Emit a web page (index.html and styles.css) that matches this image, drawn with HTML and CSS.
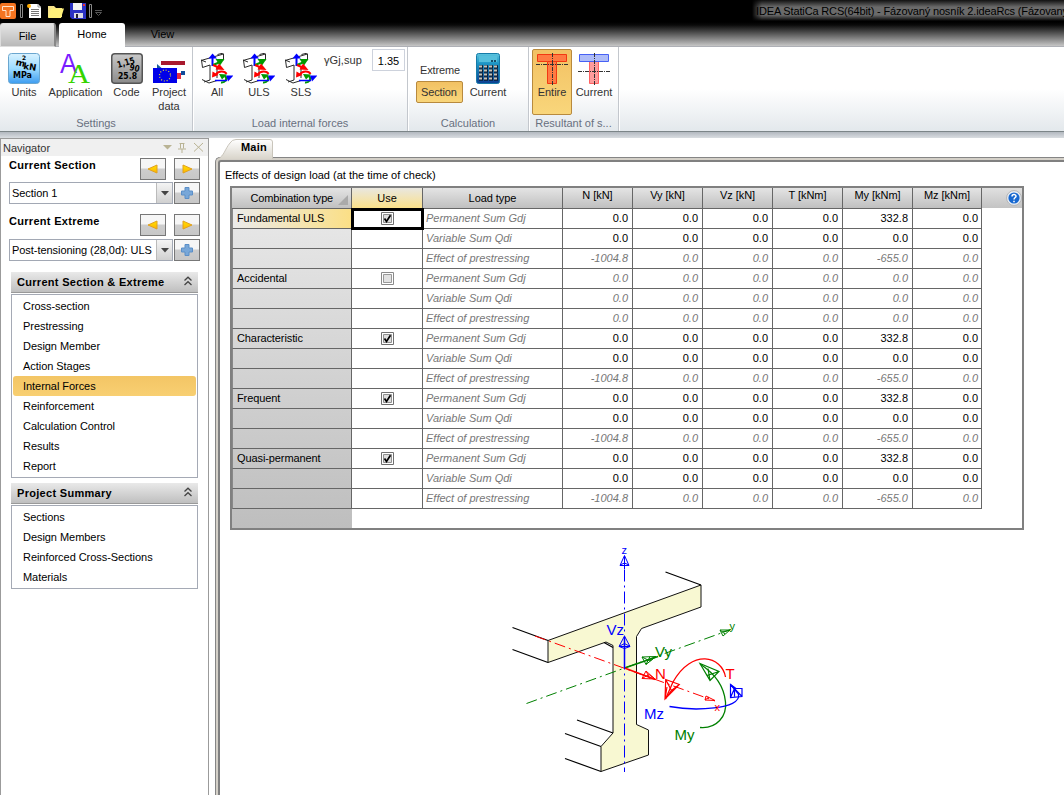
FILE: index.html
```html
<!DOCTYPE html>
<html lang="en">
<head>
<meta charset="utf-8">
<title>IDEA StatiCa RCS</title>
<link rel="stylesheet" href="styles.css">
</head>
<body>
<svg class="defs" width="0" height="0">
  <defs>
    <linearGradient id="blueBox" x1="0" y1="0" x2="0" y2="1"><stop offset="0" stop-color="#d9f2ff"/><stop offset=".5" stop-color="#9ddcff"/><stop offset="1" stop-color="#3d9cf0"/></linearGradient>
    <linearGradient id="grayBox" x1="0" y1="0" x2="0" y2="1"><stop offset="0" stop-color="#c9c9c9"/><stop offset="1" stop-color="#8b8b8b"/></linearGradient>
    <linearGradient id="calcBox" x1="0" y1="0" x2="0" y2="1"><stop offset="0" stop-color="#5cc4de"/><stop offset=".35" stop-color="#1b93c4"/><stop offset="1" stop-color="#0c3f92"/></linearGradient>
    <linearGradient id="goldArrow" x1="0" y1="0" x2="0" y2="1"><stop offset="0" stop-color="#ffe100"/><stop offset="1" stop-color="#ffb400"/></linearGradient>
  </defs>
  <symbol id="forces" viewBox="0 0 32 32">
    <path d="M0 7.500 22.500 1V7L16 9.500M.5 7l1 7.500L9 12v15M16 13v12M16.500 1.500l6-1.500M0 7l5 2M1 26.500l7 3.500 8-2.500M9 27l-6 2" fill="none" stroke="#2a2a2a"/>
    <path d="M11.500 13V4" stroke="#00f" stroke-width="2"/><path d="M7.500 5.500 11.500 .5l4.500 5z" fill="#00f"/>
    <path d="M12 12 18 9.500" stroke="#009a00" stroke-width="2"/><path d="M14.500 6h9l-4.500 6.500z" fill="#009a00"/>
    <path d="M12 12l7 3" stroke="red" stroke-width="2"/><path d="M18 10.500l5.500 6.500-9-.5z" fill="red"/>
    <path d="M15 21.500c2-4 9-4 10.500-.5" fill="none" stroke="red" stroke-width="2"/><path d="M11.500 18.500l6 3.500-6.500 2.500z" fill="red"/>
    <path d="M24 23c3 3 0 7-4 6.500" fill="none" stroke="#009a00" stroke-width="2"/><path d="M18 21l8 .5-5 5z" fill="#009a00"/>
    <path d="M14 27.500h12" stroke="#00f" stroke-width="1.500"/><path d="M25 22.500h7.500l-5.500 6z" fill="#00f"/>
  </symbol>
  <symbol id="check" viewBox="0 0 13 13">
    <path d="M.5.500h12v12H.500z" fill="#fff" stroke="#707070"/><path d="M2.500 2.500h8v8h-8z" fill="#ddd" stroke="#909090"/>
    <path d="M3.500 6.500 5.500 9.500 9.500 3.200" fill="none" stroke="#000" stroke-width="1.700"/>
  </symbol>
  <symbol id="uncheck" viewBox="0 0 13 13">
    <path d="M.5.500h12v12H.500z" fill="#fff" stroke="#8a8a8a"/><path d="M2.500 2.500h8v8h-8z" fill="#e2e2e2" stroke="#999"/>
  </symbol>
  <symbol id="left" viewBox="0 0 12 10"><path d="M10 1v8L1 5z" fill="url(#goldArrow)" stroke="#e0a020"/></symbol>
  <symbol id="right" viewBox="0 0 12 10"><path d="M2 1v8l9-4z" fill="url(#goldArrow)" stroke="#e0a020"/></symbol>
  <symbol id="plus" viewBox="0 0 12 12"><path d="M4 .5h4v3.500h3.500v4H8v3.500H4V8H.5V4H4z" fill="#78a7d8" stroke="#5b8fc8"/></symbol>
  <symbol id="collapse" viewBox="0 0 10 10"><path d="M1.500 4.500 5 1.200 8.500 4.500M1.500 9 5 5.700 8.500 9" fill="none" stroke="#444" stroke-width="1.300"/></symbol>
</svg>

<div class="top">
  <div class="titlebar">
    <svg class="quick" width="110" height="22" viewBox="0 0 110 22">
      <rect y="3" width="16" height="16" rx="2" fill="#f47421"/><path d="M2.500 6.500h11v4h-3.500v6H6v-6H2.500z" fill="none" stroke="#ffe3cc"/>
      <path d="M20.500 4.500h2v13h-2zM89.500 4.500h2v13h-2z" fill="#000" stroke="#8a8a8a"/>
      <path d="M29 4h9l3 3v11H29z" fill="#fff"/><path d="M31 9h8M31 11h8M31 13h8M31 15h8" stroke="#777" transform="translate(0 .5)"/><path d="M38 4v3h3" fill="none" stroke="#999"/><circle cx="29" cy="6" r="2" fill="#fa0"/>
      <path d="M48 6h6l2 2h6v9H48z" fill="#f7e38a"/><path d="M51 8.500h13l-3 9.500H48z" fill="#fff17a"/>
      <path d="M70 3h16v16H72l-2-2z" fill="#2b33c4"/><path d="M73 3h9v7h-9z" fill="#f3f3f3"/><path d="M83 4h2v2h-2z" fill="#e33"/><path d="M74 13h9v5h-9z" fill="#dcdce8"/><path d="M76 14h2v4h-2z" fill="#223"/>
      <path d="M95 10.500h7M95.500 12.500h6l-3 3z" fill="none" stroke="#555"/>
    </svg>
    <div class="title">IDEA StatiCa RCS(64bit) - Fázovaný nosník 2.ideaRcs (Fázovaný</div>
  </div>
  <div class="tabs"><div class="tab file">File</div><div class="tab home">Home</div><div class="tab view">View</div></div>
</div>

<div class="ribbon">
  <section class="group settings">
    <div class="tools">
      <div class="tool w48"><svg width="32" height="32" viewBox="0 0 32 32"><rect x=".5" y=".5" width="31" height="30" rx="3" fill="url(#blueBox)" stroke="#6aa6cf"/><text x="7" y="12" class="ic" transform="rotate(12 7 13)">m</text><text x="14" y="7" class="ic tiny">2</text><text x="15" y="16" class="ic" transform="rotate(8 15 16)" textLength="13" lengthAdjust="spacingAndGlyphs">kN</text><text x="5" y="25" class="ic" textLength="19" lengthAdjust="spacingAndGlyphs">MPa</text></svg><span>Units</span></div>
      <div class="tool w55"><svg width="32" height="32" viewBox="0 0 32 32"><text x="0" y="20" class="bigA" fill="#7a1cff" textLength="17" lengthAdjust="spacingAndGlyphs">A</text><text x="8" y="30" class="bigA serif" fill="#35d400" textLength="22" lengthAdjust="spacingAndGlyphs">A</text></svg><span>Application</span></div>
      <div class="tool w47"><svg width="32" height="32" viewBox="0 0 32 32"><rect x=".75" y=".75" width="30.500" height="29.500" rx="3" fill="url(#grayBox)" stroke="#555" stroke-width="1.500"/><text x="7" y="15" class="ic" transform="rotate(-16 7 15)" textLength="18" lengthAdjust="spacingAndGlyphs">1,15</text><text x="18" y="17" class="ic" transform="rotate(12 18 17)" textLength="10" lengthAdjust="spacingAndGlyphs">90</text><text x="7" y="26" class="ic" textLength="19" lengthAdjust="spacingAndGlyphs">25.8</text></svg><span>Code</span></div>
      <div class="tool w38"><svg width="32" height="32" viewBox="0 0 32 32"><path d="M8 8h24v4H8z" fill="#a8192e"/><path d="M4 11l8 7H4z" fill="#185a9c"/><path d="M28 18h4v4h-4z" fill="#114c9b"/><path d="M24 20h4v6h-4z" fill="#e22b3e"/><path d="M0 15h24v15H0z" fill="#0000e8"/><circle cx="12" cy="22.500" r="5.500" fill="none" stroke="#e6dc2e" stroke-width="1.200" stroke-dasharray="1 1.880"/></svg><span>Project<br>data</span></div>
    </div><h2>Settings</h2>
  </section>
  <section class="group load">
    <div class="tools">
      <div class="tool w42"><svg width="32" height="32"><use href="#forces"/></svg><span>All</span></div>
      <div class="tool w42"><svg width="32" height="32"><use href="#forces"/></svg><span>ULS</span></div>
      <div class="tool w42"><svg width="32" height="32"><use href="#forces"/></svg><span>SLS</span></div>
      <label class="gamma">γGj,sup</label><div class="number">1.35</div>
    </div><h2>Load internal forces</h2>
  </section>
  <section class="group calc">
    <div class="tools">
      <div class="stack"><span class="small">Extreme</span><span class="small on">Section</span></div>
      <div class="tool w50"><svg width="32" height="32" viewBox="0 0 32 32"><rect x="4.500" y=".5" width="23" height="30" rx="2" fill="url(#calcBox)" stroke="#167ba8"/><path d="M7 3h18v6H7z" fill="#55bfdc"/><path d="M19 8h5" stroke="#164d68" stroke-width="2" stroke-dasharray="2 1"/><path d="M7 14h19M7 18h19M7 22h19M7 26h19" stroke="#0b1d35" stroke-width="3.400" stroke-dasharray="4 1"/><path d="M7 13.500h19M7 17.500h19M7 21.500h19M7 25.500h19" stroke="#c9c3b7" stroke-width="2" stroke-dasharray="3 2"/></svg><span>Current</span></div>
    </div><h2>Calculation</h2>
  </section>
  <section class="group result">
    <div class="tools">
      <div class="tool w40 selected"><svg width="32" height="32" viewBox="0 0 32 32"><path d="M1.500 1.500h29v7h-10v22h-9v-22h-10z" fill="#ff7b42" stroke="#f23912"/><path d="M12 8.500h9" stroke="#f23912"/><path d="M16.500 0v32M0 11.500h32" stroke="#333" stroke-dasharray="4 1 1 1"/></svg><span>Entire</span></div>
      <div class="tool w44"><svg width="32" height="32" viewBox="0 0 32 32"><path d="M11.500 8.500h9v22h-9z" fill="#ff9c9c" stroke="#ff6262"/><path d="M1.500 1.500h29v7h-29z" fill="#aebcf8" stroke="#4761f5"/><path d="M16.500 0v32M0 18.500h32" stroke="#333" stroke-dasharray="4 1 1 1"/></svg><span>Current</span></div>
    </div><h2>Resultant of s...</h2>
  </section>
</div>
<div class="strip"></div>

<div class="work">
  <aside class="nav">
    <header class="navhead"><span>Navigator</span><svg width="46" height="12" viewBox="0 0 46 12"><path d="M2 3h9l-4.500 4.500z" fill="#b9b394"/><path d="M18.500 1.500h5M19.500 1.500v5M22.500 1.500v5M17 7h8M21 7v4" stroke="#b9b394" fill="none"/><path d="M33 1l9 8.500M42 1l-9 8.500" stroke="#b9b394"/></svg></header>
    <div class="pick">
      <div class="prow"><b>Current Section</b><i class="btn"><svg width="12" height="10"><use href="#left"/></svg></i><i class="btn"><svg width="12" height="10"><use href="#right"/></svg></i></div>
      <div class="crow"><div class="combo"><span>Section 1</span><i><svg width="8" height="5"><path d="M0 0h8L4 4.500z" fill="#444"/></svg></i></div><i class="btn"><svg width="12" height="12"><use href="#plus"/></svg></i></div>
    </div>
    <div class="pick second">
      <div class="prow"><b>Current Extreme</b><i class="btn"><svg width="12" height="10"><use href="#left"/></svg></i><i class="btn"><svg width="12" height="10"><use href="#right"/></svg></i></div>
      <div class="crow"><div class="combo"><span>Post-tensioning (28,0d): ULS</span><i><svg width="8" height="5"><path d="M0 0h8L4 4.500z" fill="#444"/></svg></i></div><i class="btn"><svg width="12" height="12"><use href="#plus"/></svg></i></div>
    </div>
    <div class="bar first"><b>Current Section &amp; Extreme</b><svg width="10" height="10"><use href="#collapse"/></svg></div>
    <ul><li>Cross-section</li><li>Prestressing</li><li>Design Member</li><li>Action Stages</li><li class="active">Internal Forces</li><li>Reinforcement</li><li>Calculation Control</li><li>Results</li><li>Report</li></ul>
    <div class="bar"><b>Project Summary</b><svg width="10" height="10"><use href="#collapse"/></svg></div>
    <ul><li>Sections</li><li>Design Members</li><li>Reinforced Cross-Sections</li><li>Materials</li></ul>
  </aside>

  <main>
    <div class="maintab"><svg width="56" height="20" viewBox="0 0 56 20"><defs><linearGradient id="tabg" x1="0" y1="0" x2="0" y2="1"><stop offset="0" stop-color="#fff"/><stop offset="1" stop-color="#d9d5cb"/></linearGradient></defs><path d="M0 20C6 17 7 10 12 4Q14 .5 18 .5H52Q54.500.5 54.500 3V20" fill="url(#tabg)" stroke="#c9c5bb"/></svg><b>Main</b></div>
    <div class="frame"><div class="inner">
      <p class="caption">Effects of design load (at the time of check)</p>
      <div class="gridbox">
        <svg class="help" width="16" height="16" viewBox="0 0 16 16"><circle cx="8" cy="8" r="7.400" fill="#e8eef6" stroke="#aaa" stroke-width=".8"/><circle cx="8" cy="8" r="5.600" fill="#1768d0"/><path d="M6 6.500c0-2.500 4-2.500 4-.2C10 7.500 8 7.600 8 9.500M8 10.700v1.600" fill="none" stroke="#fff" stroke-width="1.500"/></svg>
        <table>
          <colgroup><col class="c1"><col class="c2"><col class="c3"><col class="cn"><col class="cn"><col class="cn"><col class="cn"><col class="cn"><col class="cl"></colgroup>
          <thead><tr><th class="combi">Combination type<svg width="10" height="10"><path d="M10 0v10H0z" fill="#aaa"/></svg></th><th class="use">Use</th><th>Load type</th><th class="n">N [kN]</th><th class="n">Vy [kN]</th><th class="n">Vz [kN]</th><th class="n">T [kNm]</th><th class="n">My [kNm]</th><th class="n">Mz [kNm]</th></tr></thead>
          <tbody>
          <tr><td class="hot">Fundamental ULS</td><td class="cur"><svg width="13" height="13"><use href="#check"/></svg></td><td>Permanent Sum Gdj</td><td>0.0</td><td>0.0</td><td>0.0</td><td>0.0</td><td>332.8</td><td>0.0</td></tr>
          <tr><td></td><td></td><td>Variable Sum Qdi</td><td>0.0</td><td>0.0</td><td>0.0</td><td>0.0</td><td>0.0</td><td>0.0</td></tr>
          <tr class="off"><td></td><td></td><td>Effect of prestressing</td><td>-1004.8</td><td>0.0</td><td>0.0</td><td>0.0</td><td>-655.0</td><td>0.0</td></tr>
          <tr class="off"><td>Accidental</td><td><svg width="13" height="13"><use href="#uncheck"/></svg></td><td>Permanent Sum Gdj</td><td>0.0</td><td>0.0</td><td>0.0</td><td>0.0</td><td>0.0</td><td>0.0</td></tr>
          <tr class="off"><td></td><td></td><td>Variable Sum Qdi</td><td>0.0</td><td>0.0</td><td>0.0</td><td>0.0</td><td>0.0</td><td>0.0</td></tr>
          <tr class="off"><td></td><td></td><td>Effect of prestressing</td><td>0.0</td><td>0.0</td><td>0.0</td><td>0.0</td><td>0.0</td><td>0.0</td></tr>
          <tr><td>Characteristic</td><td><svg width="13" height="13"><use href="#check"/></svg></td><td>Permanent Sum Gdj</td><td>0.0</td><td>0.0</td><td>0.0</td><td>0.0</td><td>332.8</td><td>0.0</td></tr>
          <tr><td></td><td></td><td>Variable Sum Qdi</td><td>0.0</td><td>0.0</td><td>0.0</td><td>0.0</td><td>0.0</td><td>0.0</td></tr>
          <tr class="off"><td></td><td></td><td>Effect of prestressing</td><td>-1004.8</td><td>0.0</td><td>0.0</td><td>0.0</td><td>-655.0</td><td>0.0</td></tr>
          <tr><td>Frequent</td><td><svg width="13" height="13"><use href="#check"/></svg></td><td>Permanent Sum Gdj</td><td>0.0</td><td>0.0</td><td>0.0</td><td>0.0</td><td>332.8</td><td>0.0</td></tr>
          <tr><td></td><td></td><td>Variable Sum Qdi</td><td>0.0</td><td>0.0</td><td>0.0</td><td>0.0</td><td>0.0</td><td>0.0</td></tr>
          <tr class="off"><td></td><td></td><td>Effect of prestressing</td><td>-1004.8</td><td>0.0</td><td>0.0</td><td>0.0</td><td>-655.0</td><td>0.0</td></tr>
          <tr><td>Quasi-permanent</td><td><svg width="13" height="13"><use href="#check"/></svg></td><td>Permanent Sum Gdj</td><td>0.0</td><td>0.0</td><td>0.0</td><td>0.0</td><td>332.8</td><td>0.0</td></tr>
          <tr><td></td><td></td><td>Variable Sum Qdi</td><td>0.0</td><td>0.0</td><td>0.0</td><td>0.0</td><td>0.0</td><td>0.0</td></tr>
          <tr class="off"><td></td><td></td><td>Effect of prestressing</td><td>-1004.8</td><td>0.0</td><td>0.0</td><td>0.0</td><td>-655.0</td><td>0.0</td></tr>
          </tbody>
        </table>
      </div>
      <svg class="beam" width="260" height="240" viewBox="500 540 260 240">
        <path class="body" d="M548 640.500 701 585V607L641.500 628.500 636.500 636.500V724.500L648.500 730V755L601 771.500V746.500L613 733V645.500L606 642 548 662.500z"/>
        <path class="edge" d="M665.500 572 701 585M512.500 627.500l35.500 13M512.500 649.500l35.500 13M577 720l36 13M565 733.500l36 13M565 758.500l36 13M604 642.500l9 5"/>
        <g class="green"><path d="M526.500 703.500 731 629.500" stroke-dasharray="11 4 2 4"/><path d="M624.500 668 658 656.500" stroke-width="1.500"/><path d="M730 630l-10 0 3 6zM720 630l5 4M722 632l8-2M656 656.500l-14 .5 4 7.500zM642 657l8 4 6-4.500M646 664.500l4-8"/><path d="M700 727.500C717 729 727 716 725.500 702 724 686 714 673 700 664" stroke-width="1.300"/><path d="M700 663.500l19 8-9 9zM700 663.500l7 12 12-4M710 680.500l-2-12M707 675.500l3 5" stroke-width="1.200"/></g>
        <g class="red"><path d="M535 636 715 701" stroke-dasharray="11 4 2 4"/><path d="M624.500 668l31 11.500" stroke-width="1.500"/><path d="M655 679l-9-8-4 7.500zM642 678.500l7-4 6 4.500M646 671l4 8M715 700.500l-9-4.500-1 4zM705 700l4-3"/><path d="M725.500 677C722 656 692 648 673 682L665.500 699" stroke-width="1.300"/><path d="M665 699l.7-19.500 13.600 5zM665 699l6.500-8.500 7.800-6M665.700 679.500l6 11.500M665 699l2-12" stroke-width="1.200"/></g>
        <g class="blue"><path d="M624.500 569.500V772" stroke-dasharray="12 4 2 4"/><path d="M624.500 668V637" stroke-width="1.500"/><path d="M624.500 555.500l-4.500 10h9zM620 565l4.500-2 4.500 2M624.500 556v13M624.500 636l-5.500 10.500h11zM619 646.500l5.500 2 5.500-2M619 646.500l5.500-3 5.500 3"/><path d="M669.500 706.500C693 711 742 710 738.500 694L731 685" stroke-width="1.300"/><path d="M730.500 684.500v13l11.500-1v-8h-6zM730.500 697.500l4-9v8M730.500 684.500l11.500 12" stroke-width="1.200"/></g>
        <g class="lbl"><text x="606.500" y="635" fill="#00f">Vz</text><text x="655" y="657" fill="#008000">Vy</text><text x="655" y="679" fill="red">N</text><text x="725.500" y="679" fill="red">T</text><text x="644" y="719" fill="#00f">Mz</text><text x="674.500" y="740" fill="#008000">My</text></g>
        <g class="sm"><text x="621.500" y="554" fill="#00f">z</text><text x="729.500" y="630" fill="#008000">y</text><text x="714.500" y="710.500" fill="red">x</text></g>
      </svg>
    </div></div>
  </main>
</div>
</body>
</html>
```
FILE: styles.css
```css
* { box-sizing: border-box; }
body { margin: 0; width: 1064px; height: 795px; overflow: hidden; background: #fff; font: 11px/14px "Liberation Sans", Arial, sans-serif; color: #000; }
svg { display: block; flex: none; overflow: visible; }
.defs { position: absolute; }
i { font-style: normal; }

.top { height: 47px; background: linear-gradient(#000 0 22px, #0a0a0a 25px, #c6c6c6 46px); border-bottom: 1px solid #aeb0b6; }
.titlebar { height: 23px; display: flex; justify-content: space-between; }
.title { width: 312px; height: 21px; padding-left: 4px; white-space: nowrap; line-height: 22px; letter-spacing: -.15px; background: linear-gradient(90deg, #000, transparent 10px), linear-gradient(#111, #6a6a6a 7px 15px, #000 21px); }
.tabs { display: flex; height: 24px; }
.tab { text-align: center; line-height: 23px; }
.file { width: 56px; line-height: 24px; background: linear-gradient(#e5e5e5, #b9b9b9); border: 1px solid #ddd; border-right: 2px solid #888; border-radius: 3px 3px 0 0; }
.home { width: 66px; margin-left: 3px; background: #fff; border-radius: 3px 3px 0 0; }
.view { width: 75px; }

.ribbon { height: 84px; display: flex; background: linear-gradient(#fff 50%, #e3e8ec); }
.group { border-right: 1px solid #c3c7cd; box-shadow: 1px 0 #fff; display: flex; flex-direction: column; }
.group h2 { margin: 0; font: inherit; color: #68707f; text-align: center; line-height: 15px; }
.tools { height: 70px; display: flex; align-items: flex-start; color: #333; }
.tool { display: flex; flex-direction: column; align-items: center; padding-top: 6px; text-align: center; white-space: nowrap; height: 66px; }
.tool span { line-height: 14px; }
.settings { width: 193px; }
.load { width: 215px; }
.load .tools { padding-left: 3px; }
.calc { width: 121px; }
.result { width: 90px; }
.result .tools { padding: 2px 0 0 3px; }
.result .tool { padding-top: 4px; }
.w48 { width: 48px; } .w55 { width: 55px; } .w47 { width: 47px; } .w38 { width: 38px; }
.w42 { width: 42px; } .w50 { width: 50px; } .w40 { width: 40px; } .w44 { width: 44px; }
.gamma { margin: 6px 0 0 2px; width: 48px; white-space: nowrap; letter-spacing: .1px; }
.number { width: 33px; height: 22px; margin-top: 2px; border: 1px solid #cdd2dc; background: #fff; text-align: center; line-height: 22px; color: #000; }
.stack { width: 55px; padding: 13px 0 0 8px; display: flex; flex-direction: column; }
.small { height: 21px; line-height: 20px; width: 47px; padding-left: 4px; letter-spacing: -.15px; }
.small.on { height: 22px; line-height: 21px; padding-left: 4px; }
.on, .selected { background: linear-gradient(#f2c163, #f9d67b); border: 1px solid #b88a3e; border-radius: 2px; }
.result .selected { padding-top: 3px; }
.ic { font: bold 9px "DejaVu Sans", sans-serif; }
.tiny { font-size: 6px; }
.bigA { font: 28px "Liberation Sans", sans-serif; }
.serif { font-family: "Liberation Serif", serif; }

.strip { height: 7px; border-top: 1px solid #7c8588; background: linear-gradient(#b2b8bf, #d9dde1); }
.work { height: 657px; display: flex; }
.nav { width: 209px; border: 1px solid #9b9b9b; border-bottom: 0; }
.navhead { height: 17px; background: #f0f0f0; display: flex; justify-content: space-between; align-items: center; padding: 1px 1px 0 2px; color: #333; }
.pick { padding: 2px 8px 0; }
.second { padding-top: 10px; }
.prow { display: flex; height: 24px; gap: 8px; }
.second .prow { height: 25px; }
.prow b { flex: 1; line-height: 15px; letter-spacing: .3px; }
.btn { width: 26px; height: 22px; border: 1px solid #777; background: linear-gradient(#f6f6f6 45%, #cdcdcd 50%, #c7c7c7); display: grid; place-items: center; flex: none; }
.crow { display: flex; gap: 1px; height: 22px; }
.combo { width: 164px; border: 1px solid #a2a8b4; display: flex; line-height: 20px; white-space: nowrap; }
.combo span { width: 144px; margin-left: 2px; flex: none; letter-spacing: -.05px; }
.combo i { flex: 1; display: grid; place-items: center; border-left: 1px solid #bbb; background: linear-gradient(#f4f4f4, #d0d0d0); }
.bar { margin: 5px 10px 1px; height: 21px; display: flex; justify-content: space-between; padding: 0 5px 0 6px; line-height: 21px; background: linear-gradient(#e9e9e9, #bfbfbf); border-bottom: 1px solid #999; letter-spacing: .3px; }
.bar svg { margin-top: 4px; }
.bar.first { margin-top: 11px; }
.nav ul { list-style: none; margin: 0 10px; padding: 1px; border: 1px solid #a5aab5; }
.nav li { height: 20px; line-height: 20px; padding-left: 10px; border-radius: 3px; letter-spacing: -.05px; }
.active { background: linear-gradient(#f3c565, #f8cf72); }

main { flex: 1; min-width: 0; padding: 1px 0 0 6px; overflow: hidden; display: flex; flex-direction: column; }
.maintab { height: 18px; flex: none; padding-left: 3px; display: grid; z-index: 1; }
.maintab svg, .maintab b { grid-area: 1 / 1; }
.maintab b { margin-left: 23px; line-height: 17px; z-index: 1; letter-spacing: .2px; }
.frame { flex: 1; border: solid #858585; border-width: 1px 0 0 1px; border-radius: 5px 0 0 0; background: #d4d0c8; padding: 2px 0 0 2px; }
.inner { height: 100%; background: #fff; border: solid #808080; border-width: 2px 0 0 2px; padding: 6px 0 0 10px; border-radius: 3px 0 0 0; }
.caption { margin: 0 0 4px -5px; line-height: 14px; }
.gridbox { width: 794px; height: 344px; border: 2px solid #808080; position: relative; background: linear-gradient(#e0e0e0, #c3c3c3) 0 0 / 100% 20px no-repeat, linear-gradient(#ebebeb, #bebebe) 0 0 / 120px 100% no-repeat, #fff; }
.help { position: absolute; right: 0; top: 2px; }
table { table-layout: fixed; border-collapse: separate; border-spacing: 0; width: 750px; }
.c1 { width: 120px; } .c2 { width: 71px; } .c3 { width: 140px; } .cn { width: 70px; } .cl { width: 69px; }
th, td { padding: 0 4px 0 3px; height: 20px; line-height: 19px; border: solid #666; border-width: 0 1px 1px 0; font-weight: normal; white-space: nowrap; }
td:last-child { padding-right: 3px; }
th { background: linear-gradient(#e4e4e4, #c0c0c0); line-height: 20px; padding: 0; letter-spacing: -.05px; }
th.n { line-height: 15px; vertical-align: top; }
.combi svg { display: inline-block; margin-left: 5px; vertical-align: -3px; }
th.combi { text-align: right; padding-right: 3px; letter-spacing: -.2px; }
th.use { background: linear-gradient(#e9e7e0, #fbe18a); }
td { text-align: right; }
td:first-child { text-align: left; border-left: 1px solid #888; padding-left: 4px; letter-spacing: -.1px; }
td:nth-child(2) { padding: 0; }
td:nth-child(3) { text-align: left; font-style: italic; color: #777; }
td svg { margin: 0 auto; }
.off td:nth-child(n+4) { font-style: italic; color: #777; }
.hot { background: linear-gradient(90deg, #ebebeb, #fbdf86); }
.cur { outline: 3px solid #000; outline-offset: -2px; }
.beam { margin: 10px 0 0 270px; }
.body { fill: #f8f8d2; stroke: #111; }
.edge { fill: none; stroke: #000; stroke-width: 1.200; }
.green { fill: none; stroke: #008000; }
.red { fill: none; stroke: #f00; }
.blue { fill: none; stroke: #00f; }
.lbl { font-size: 15px; }
.sm { font-size: 11px; }
```
